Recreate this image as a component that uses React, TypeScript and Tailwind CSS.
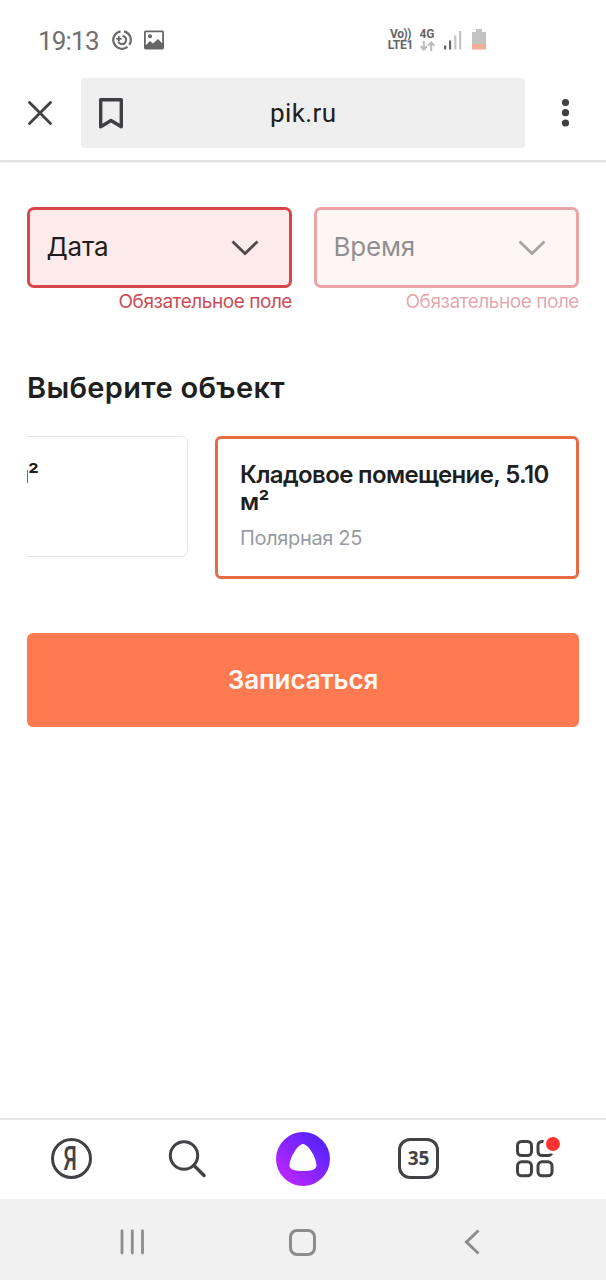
import { clsx } from "clsx";

type SelectFieldProps = {
  label: string;
  error: string;
  disabled?: boolean;
};

function SelectField({ label, error, disabled }: SelectFieldProps) {
  return (
    <div className={clsx("w-[265px]", disabled && "opacity-50")}>
      <button className="flex h-[81px] w-full items-center justify-between rounded-[7px] border-[3.5px] border-[#d9464a] bg-[#fdebeb] pr-[30px] pl-[17px]">
        <span className="-ml-[0.5px] pb-[2px] text-[26px] tracking-[-0.2px] text-[#1f1c1c]">{label}</span>
        <svg width="28" height="16" viewBox="0 0 28 16" fill="none" stroke="#514848" strokeWidth="2.8">
          <path d="M1.5 1.5 14 13.5 26.5 1.5" />
        </svg>
      </button>
      <p className="mt-px text-right text-[19px] leading-[26px] tracking-[-0.45px] whitespace-nowrap text-[#cc4d55]">
        {error}
      </p>
    </div>
  );
}

function StatusBar() {
  return (
    <div className="flex h-[78px] items-center pt-[2px] pl-[38px] text-[#666]">
      <span className="w-[74px] pt-[2px] text-[26px] leading-none tracking-[-0.8px] text-[#707070]">19:13</span>
      <svg width="20" height="20" viewBox="0 0 20 20" fill="none" stroke="#6b6b6b" strokeWidth="2.2">
        <path d="M8.5 1.3A8.8 8.8 0 1 0 15.5 16.9" />
        <path d="M12 1.4A8.8 8.8 0 0 1 17.3 14.9" />
        <path d="M10.5 5.8A4.2 4.2 0 1 1 6.2 11.8" />
        <path d="M4.2 8.8h5.4M6.9 6.2v5" strokeWidth="1.8" />
      </svg>
      <svg className="ml-3" width="20" height="20" viewBox="0 0 20 20">
        <rect y=".5" width="20" height="19" rx="1.8" fill="#666" />
        <path d="M1.8 15.2 6 11l3 2.5 5-4.5 4.2 4.2V2.3H1.8Z" fill="#fdfdfd" />
        <circle cx="6" cy="6.3" r="2" fill="#666" />
      </svg>
      <div className="ml-[223px] flex w-[27px] flex-col items-center text-[12px] leading-[11px] font-bold">
        <span className="tracking-[-0.5px]">Vo))</span>
        <span className="tracking-[-0.2px]">LTE1</span>
      </div>
      <div className="ml-[5px] flex w-4 flex-col items-center">
        <span className="text-[12px] leading-[11px] font-bold">4G</span>
        <svg className="mt-px" width="15" height="10" viewBox="0 0 15 10" fill="none" stroke="#bbb" strokeWidth="2">
          <path d="M3.8 0v8.5M.7 5.3l3.1 3.3 3.1-3.3M11.2 10V1.5M8.1 4.7l3.1-3.3 3.1 3.3" />
        </svg>
      </div>
      <svg className="ml-[9px]" width="18" height="20" viewBox="0 0 18 20">
        <path d="M0 15.5h2.2v4H0ZM5 10.5h2.2v9H5Z" fill="#666" />
        <path d="M10.2 5.5h2.2v14h-2.2ZM15 1h2.2v18.5H15Z" fill="#c4c4c4" />
      </svg>
      <svg className="mb-[2px] ml-[10px]" width="14" height="21" viewBox="0 0 14 21">
        <path d="M4 0h6v3h4v12H0V3h4Z" fill="#c3c3c3" />
        <path d="M0 15h14v5.5H0Z" fill="#f3ac98" />
      </svg>
    </div>
  );
}

function AddressBar() {
  return (
    <div className="flex h-[70px] items-center">
      <div className="flex w-[80px] justify-center">
        <svg width="24" height="24" viewBox="0 0 24 24" stroke="#3f3f44" strokeWidth="2.8" strokeLinecap="round">
          <path d="M1.5 1.5l21 21M22.5 1.5l-21 21" />
        </svg>
      </div>
      <div className="ml-px flex h-full w-[444px] items-center rounded-[4px] bg-[#efefef] pl-[18px]">
        <svg width="24" height="31" viewBox="0 0 24 31" fill="none" stroke="#3f3f44" strokeWidth="3.4" strokeLinejoin="round">
          <path d="M1.7 1.7h20.6v27.1L12 22.5 1.7 28.8Z" />
        </svg>
        <span className="ml-[147px] text-[26px] leading-none tracking-[0.4px] text-[#202020]">pik.ru</span>
      </div>
      <svg className="ml-[36px]" width="9" height="30" viewBox="0 0 9 30" fill="#3f3f44">
        <circle cx="4.5" cy="4.5" r="3.6" />
        <circle cx="4.5" cy="14.7" r="3.6" />
        <circle cx="4.5" cy="25" r="3.6" />
      </svg>
    </div>
  );
}

function BrowserBar() {
  return (
    <div className="grid h-[81px] grid-cols-5 items-center justify-items-center border-t-2 border-[#e6e6e6] bg-white px-[13px] pb-[2px] text-[#424246]">
      <div className="flex size-[41px] items-center justify-center rounded-full border-[3px] border-current">
        <span className="-ml-px scale-x-[0.66] font-[Roboto] text-[33px] leading-none font-medium">Я</span>
      </div>
      <svg width="38" height="38" viewBox="0 0 38 38" fill="none" stroke="currentColor" strokeWidth="3" strokeLinecap="round">
        <circle cx="16" cy="15.5" r="13.7" />
        <path d="M26 25.5 36 35.5" strokeWidth="3.4" />
      </svg>
      <svg width="54" height="54" viewBox="0 0 54 54">
        <defs>
          <linearGradient id="alice" x1=".15" y1=".85" x2=".85" y2=".15">
            <stop offset="0" stopColor="#b826ff" />
            <stop offset="1" stopColor="#5524ff" />
          </linearGradient>
        </defs>
        <circle cx="27" cy="27" r="27" fill="url(#alice)" />
        <path
          d="M27 12C32.5 12 40.5 26.5 40.5 33.5C40.5 38 34 39 27 39S13.5 38 13.5 33.5C13.5 26.5 21.5 12 27 12Z"
          fill="#fff"
        />
      </svg>
      <div className="mr-px flex size-[41px] items-center justify-center rounded-[12px] border-[3px] border-current">
        <span className="font-['Noto_Sans'] text-[19px] leading-none font-bold">35</span>
      </div>
      <div className="relative">
        <svg width="38" height="38" viewBox="0 0 38 38" fill="none" stroke="currentColor" strokeWidth="3">
          <rect x="1.5" y="1.5" width="14" height="14" rx="4" />
          <rect x="22" y="1.5" width="14" height="14" rx="4" />
          <rect x="1.5" y="21.8" width="14" height="14" rx="4" />
          <rect x="22" y="21.8" width="14" height="14" rx="4" />
        </svg>
        <span className="absolute -top-[6px] -right-[9px] size-[20px] rounded-full border-[3.5px] border-white bg-[#ff3333]" />
      </div>
    </div>
  );
}

function SystemNav() {
  return (
    <div className="grid h-[81px] grid-cols-3 items-center justify-items-center bg-[#f1f1f1] pt-[5px] pr-[49px] pl-[47px] text-[#8c8c8c]">
      <svg width="26" height="26" viewBox="0 0 26 26" stroke="currentColor" strokeWidth="2.8" strokeLinecap="round">
        <path d="M3 2v22M13.3 2v22M23.5 2v22" />
      </svg>
      <div className="size-[27px] rounded-[8px] border-[3px] border-current" />
      <svg width="16" height="26" viewBox="0 0 16 26" fill="none" stroke="currentColor" strokeWidth="3">
        <path d="M14.5 1.5 2.5 13l12 11.5" />
      </svg>
    </div>
  );
}

export default function App() {
  return (
    <div className="flex h-[1280px] w-[606px] flex-col overflow-hidden bg-white font-[Inter,sans-serif]">
      <header className="h-[162px] border-b-2 border-[#e2e2e2] font-[Roboto,sans-serif] shadow-[0_1px_2px_#eee]">
        <StatusBar />
        <AddressBar />
      </header>

      <main className="flex-1 px-[27px] pt-[45px]">
        <div className="flex justify-between">
          <SelectField label="Дата" error="Обязательное поле" />
          <SelectField label="Время" error="Обязательное поле" disabled />
        </div>

        <h2 className="mt-[54px] text-[29px] leading-[38px] font-semibold tracking-[0.33px] whitespace-nowrap text-[#1f1f1f]">
          Выберите объект
        </h2>

        <div className="mt-[29px] flex items-start gap-[27px] overflow-hidden text-[#1f1f1f]">
          <div className="-ml-[203px] h-[121px] w-[364px] shrink-0 rounded-md border-[1.5px] border-[#e4e4e4] pt-[24px] pr-[149px] text-right text-[24px] leading-[27px] font-semibold tracking-[-1px]">
            м²
          </div>
          <div className="h-[143px] w-[364px] shrink-0 rounded-md border-[3.5px] border-[#e96b43] pt-[22px] pl-[22px]">
            <p className="w-[325px] text-[24px] leading-[27px] font-semibold tracking-[-0.64px]">
              Кладовое помещение, 5.10 <br />
              м²
            </p>
            <p className="mt-[9px] text-[20px] leading-[28px] tracking-[-0.35px] text-[#989ca3]">Полярная 25</p>
          </div>
        </div>

        <button className="mt-[54px] h-[94px] w-full rounded-md bg-[#ff7a50] pb-[2px] text-[26px] font-semibold tracking-[-0.1px] text-[#fffaf5]">
          Записаться
        </button>
      </main>

      <BrowserBar />
      <SystemNav />
    </div>
  );
}
